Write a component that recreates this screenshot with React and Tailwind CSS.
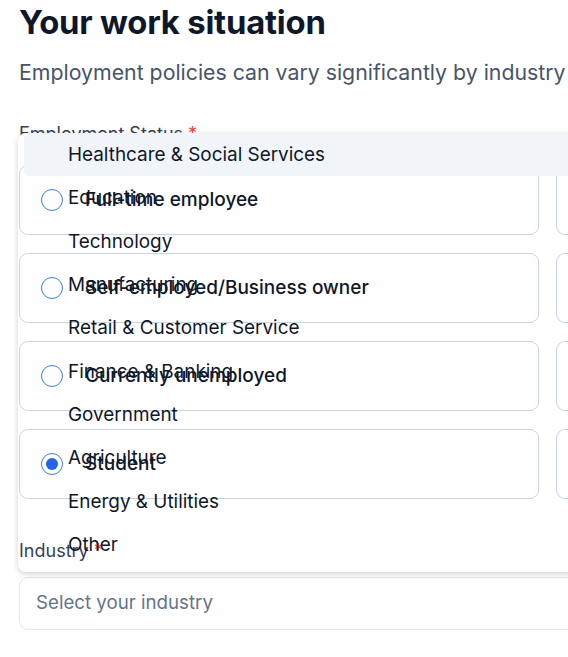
import React from "react";

const options = [
  { label: "Full-time employee", checked: false },
  { label: "Self-employed/Business owner", checked: false },
  { label: "Currently unemployed", checked: false },
  { label: "Student", checked: true },
];

const industries = [
  "Healthcare & Social Services",
  "Education",
  "Technology",
  "Manufacturing",
  "Retail & Customer Service",
  "Finance & Banking",
  "Government",
  "Agriculture",
  "Energy & Utilities",
  "Other",
];

function Radio({ checked }) {
  return (
    <span className="flex h-[22px] w-[22px] shrink-0 items-center justify-center rounded-full border-[1.5px] border-[#3b82f6] bg-transparent">
      {checked && <span className="h-[12px] w-[12px] rounded-full bg-[#2563eb]" />}
    </span>
  );
}

export default function App() {
  return (
    <div className="h-[657px] w-[568px] overflow-hidden bg-white">
      <div
        className="relative w-[1120px] pl-[19px] pt-[3px]"
        style={{ fontFamily: "Inter, 'Noto Sans', sans-serif" }}
      >
        <h1 className="text-[32.8px] font-bold leading-[38px] tracking-[-0.2px] text-[#0f172a]">
          Your work situation
        </h1>
        <p className="mt-[16px] text-[21.3px] leading-[30px] text-[#475569]">
          Employment policies can vary significantly by industry and employment type
        </p>

        <div className="mt-[34px] text-[18px] leading-[26px] text-[#334155]">
          Employment Status <span className="text-[#ef4444]">*</span>
        </div>

        <div className="relative z-20 mt-[18px] grid w-[1056px] grid-cols-2 gap-x-[17px] gap-y-[18px]">
          {options.map((o) => (
            <React.Fragment key={o.label}>
              <div className="flex h-[70px] items-center rounded-[9px] border border-[#cbd5e1] pl-[21px]">
                <Radio checked={o.checked} />
                <span className="ml-[22px] text-[19px] font-medium leading-[24px] text-[#0f172a]">
                  {o.label}
                </span>
              </div>
              <div className="h-[70px] rounded-[9px] border border-[#cbd5e1]" />
            </React.Fragment>
          ))}
        </div>

        <div className="relative z-20 mt-[39px] text-[18px] leading-[26px] text-[#334155]">
          Industry <span className="text-[#ef4444]">*</span>
        </div>
        <div className="mt-[13px] flex h-[53px] w-[1056px] items-center rounded-[9px] border border-[#e2e8f0] pl-[16px] text-[18.7px] text-[#64748b]">
          Select your industry
        </div>

        {/* dropdown panel background */}
        <div className="absolute left-[18px] top-[133px] z-10 h-[439px] w-[700px] rounded-[8px] bg-white shadow-[0_2px_6px_rgba(0,0,0,0.18)]" />
        {/* dropdown items */}
        <div className="absolute left-[18px] top-[133px] z-30 w-[700px] px-[6px]">
          {industries.map((name, i) => (
            <div
              key={name}
              className={
                "flex h-[43.3px] items-center rounded-[6px] pl-[44px] pt-[1px] text-[18.9px] leading-[24px] text-[#0f172a] " +
                (i === 0 ? "bg-[#f1f5f9]" : "")
              }
            >
              {name}
            </div>
          ))}
        </div>
      </div>
    </div>
  );
}
